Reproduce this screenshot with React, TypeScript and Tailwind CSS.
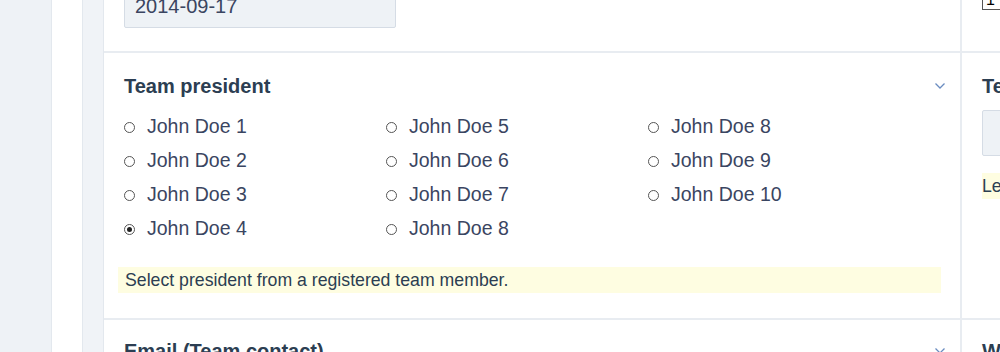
import React from "react";

const FONT = { fontFamily: '"Liberation Sans", Arial, sans-serif' };

const members = [
  ["John Doe 1", "John Doe 2", "John Doe 3", "John Doe 4"],
  ["John Doe 5", "John Doe 6", "John Doe 7", "John Doe 8"],
  ["John Doe 8", "John Doe 9", "John Doe 10"],
];

function Chevron() {
  return (
    <svg width="12" height="8" viewBox="0 0 12 8" className="text-[#6a8cc0]">
      <path d="M1.5 1.5 L6 6 L10.5 1.5" fill="none" stroke="currentColor" strokeWidth="1.3" />
    </svg>
  );
}

function Radio({ label, checked }: { label: string; checked?: boolean }) {
  return (
    <label className="flex h-[34px] items-center gap-[12px] text-[19.5px] text-[#3a4561]">
      <span className="flex h-[11px] w-[11px] items-center justify-center rounded-full border border-[#555] bg-white">
        {checked && <span className="h-[5px] w-[5px] rounded-full bg-[#222]" />}
      </span>
      {label}
    </label>
  );
}

export default function App() {
  return (
    <div style={FONT} className="flex h-[352px] w-[1000px] overflow-hidden bg-[#eef2f6]">
      <div className="w-[52px] shrink-0 border-r border-[#e3e8ee] bg-[#eef2f6]" />
      <div className="w-[31px] shrink-0 border-r border-[#e3e8ee] bg-white" />
      <div className="w-[21px] shrink-0 border-r border-[#e3e8ee] bg-[#f0f3f7]" />
      <main className="flex min-w-0 flex-1 bg-white">
        <div className="w-[858px] shrink-0 border-r-2 border-[#e8ecf1]">
          <div className="flex h-[53px] flex-col border-b-2 border-[#e8ecf1] px-[20px]">
            <div className="-mt-[18px] flex h-[46px] w-[272px] items-end rounded-[2px] border border-[#d5dce5] bg-[#eef2f6] px-[10px] pb-[11px] text-[20px] leading-[20px] text-[#3a4561]">
              2014-09-17
            </div>
          </div>
          <section className="h-[267px] border-b-2 border-[#e8ecf1] pl-[20px] pr-[14px] pt-[18px]">
            <div className="flex items-center justify-between">
              <h2 className="text-[20px] font-bold text-[#2c3e52]">Team president</h2>
              <Chevron />
            </div>
            <div className="mt-[9px] flex">
              {members.map((col, i) => (
                <div key={i} className="flex w-[262px] flex-col">
                  {col.map((m) => (
                    <Radio key={m} label={m} checked={m === "John Doe 4"} />
                  ))}
                </div>
              ))}
            </div>
            <p className="-ml-[6px] mt-[21px] w-[823px] bg-[#fefde1] px-[7px] py-[2px] text-[17.7px] leading-[22px] text-[#2c3e52]">
              Select president from a registered team member.
            </p>
          </section>
          <div className="flex items-center justify-between pl-[20px] pr-[14px] pt-[16px]">
            <h2 className="text-[20px] font-bold text-[#2c3e52]">Email (Team contact)</h2>
            <Chevron />
          </div>
        </div>
        <div className="min-w-0 flex-1 overflow-hidden">
          <div className="flex h-[53px] flex-col border-b-2 border-[#e8ecf1] pl-[20px]">
            <div className="-mt-[12px] h-[22px] w-[60px] border border-[#555] bg-white pl-[3px] pt-[3px] text-[16px] leading-[16px] text-black">
              1
            </div>
          </div>
          <section className="h-[267px] border-b-2 border-[#e8ecf1] pl-[20px] pt-[18px]">
            <h2 className="whitespace-nowrap text-[20px] font-bold text-[#2c3e52]">Team name</h2>
            <div className="mt-[9px] h-[46px] w-[200px] rounded-[2px] border border-[#d5dce5] bg-[#eef2f6]" />
            <p className="mt-[17px] w-[200px] whitespace-nowrap bg-[#fefde1] py-[2px] text-[17.7px] leading-[22px] text-[#2c3e52]">
              Leave empty
            </p>
          </section>
          <div className="pl-[20px] pt-[16px]">
            <h2 className="whitespace-nowrap text-[20px] font-bold text-[#2c3e52]">Website</h2>
          </div>
        </div>
      </main>
    </div>
  );
}
